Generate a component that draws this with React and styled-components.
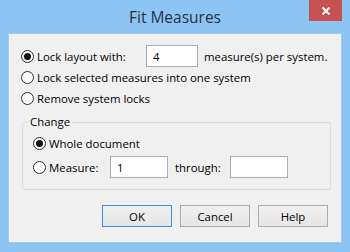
import React from "react";
import styled, { createGlobalStyle } from "styled-components";

const Global = createGlobalStyle`
  html, body { margin: 0; padding: 0; }
  body { width: 350px; height: 252px; overflow: hidden; background: #8cc4f3; }
`;

const Window = styled.div`
  width: 350px;
  height: 252px;
  box-sizing: border-box;
  background: #8cc4f3;
  display: flex;
  flex-direction: column;
  padding: 0 8px 9px 8px;
  font-family: "Open Sans", "Noto Sans", sans-serif;
`;

const TitleBar = styled.div`
  height: 33px;
  display: grid;
  grid-template-columns: 1fr auto 1fr;
  align-items: start;
`;

const Title = styled.div`
  grid-column: 2;
  font-size: 15.5px;
  line-height: 20px;
  padding-top: 7px;
  color: #26323d;
`;

const CloseButton = styled.div`
  grid-column: 3;
  justify-self: end;
  width: 33px;
  height: 21px;
  background: #c75050;
  display: flex;
  align-items: center;
  justify-content: center;
`;

const Client = styled.div`
  flex: 1;
  background: #f0f0f0;
  border: 1px solid #a9cbe9;
  display: flex;
  flex-direction: column;
  padding: 11px 13px 0 12px;
  font-size: 11.4px;
  color: #000;
`;

const Row = styled.div`
  display: flex;
  align-items: center;
  height: ${(p) => p.$h || 21}px;
`;

const RadioCircle = styled.span`
  width: 13px;
  height: 13px;
  box-sizing: border-box;
  border-radius: 50%;
  border: 1px solid #2a2a2a;
  background: #fff;
  display: inline-flex;
  align-items: center;
  justify-content: center;
  flex-shrink: 0;
  margin-right: 3px;
  &::after {
    content: "";
    width: 7px;
    height: 7px;
    border-radius: 50%;
    background: ${(p) => (p.$checked ? "#111" : "transparent")};
  }
`;

const Label = styled.span`
  white-space: nowrap;
  width: ${(p) => (p.$w ? `${p.$w}px` : "auto")};
  flex-shrink: 0;
`;

const TextBox = styled.div`
  box-sizing: border-box;
  width: ${(p) => p.$w}px;
  height: 22px;
  background: #fff;
  border: 1px solid #abadb3;
  padding: 0 6px;
  display: flex;
  align-items: center;
  margin-right: ${(p) => p.$mr || 0}px;
  flex-shrink: 0;
`;

const Group = styled.fieldset`
  margin: 5px 0 0 1px;
  width: 309px;
  box-sizing: border-box;
  border: 1px solid #dcdcdc;
  border-radius: 2px;
  padding: 2px 0 11px 10px;
  min-inline-size: 0;
`;

const Legend = styled.legend`
  margin-left: -5px;
  padding: 0 2px;
  font-size: 11.4px;
  line-height: 16px;
`;

const GroupRow = styled(Row)`
  height: 22px;
  & + & { margin-top: 2px; }
`;

const ButtonBar = styled.div`
  display: flex;
  justify-content: flex-end;
  gap: 8px;
  margin-top: 15px;
`;

const Button = styled.div`
  width: 70px;
  height: 22px;
  box-sizing: border-box;
  border: 1px solid ${(p) => (p.$default ? "#3c8fe0" : "#acacac")};
  background: linear-gradient(#f0f0f0, #e5e5e5);
  display: flex;
  align-items: center;
  justify-content: center;
  font-size: 11.4px;
  color: #000;
`;

export default function App() {
  return (
    <>
      <Global />
      <Window>
        <TitleBar>
          <Title>Fit Measures</Title>
          <CloseButton>
            <svg width="10" height="10" viewBox="0 0 10 10">
              <path d="M1.5 1.5 L8.5 8.5 M8.5 1.5 L1.5 8.5" stroke="#fff" strokeWidth="2" />
            </svg>
          </CloseButton>
        </TitleBar>
        <Client>
          <Row $h={22}>
            <RadioCircle $checked />
            <Label $w={109}>Lock layout with:</Label>
            <TextBox $w={52} $mr={6}>4</TextBox>
            <Label>measure(s) per system.</Label>
          </Row>
          <Row>
            <RadioCircle />
            <Label>Lock selected measures into one system</Label>
          </Row>
          <Row>
            <RadioCircle />
            <Label>Remove system locks</Label>
          </Row>
          <Group>
            <Legend>Change</Legend>
            <GroupRow>
              <RadioCircle $checked />
              <Label>Whole document</Label>
            </GroupRow>
            <GroupRow>
              <RadioCircle />
              <Label $w={61}>Measure:</Label>
              <TextBox $w={58} $mr={7}>1</TextBox>
              <Label $w={55}>through:</Label>
              <TextBox $w={58} />
            </GroupRow>
          </Group>
          <ButtonBar>
            <Button $default>OK</Button>
            <Button>Cancel</Button>
            <Button>Help</Button>
          </ButtonBar>
        </Client>
      </Window>
    </>
  );
}
